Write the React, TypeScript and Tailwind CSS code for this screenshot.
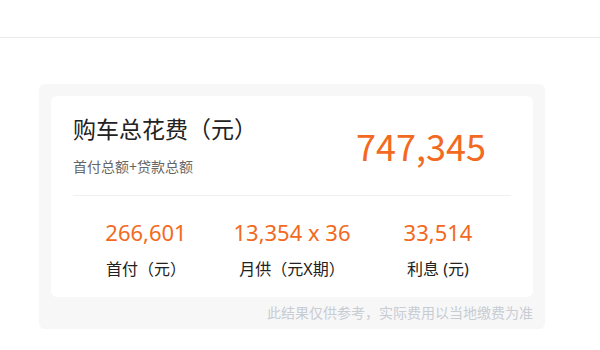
const cjk = { fontFamily: '"Noto Sans", "Noto Sans CJK SC", sans-serif' }

function Stat({ value, label }: { value: string; label: string }) {
  return (
    <div className="flex flex-col items-center">
      <div className="text-[22px] leading-[30px] text-[#f26a21]">{value}</div>
      <div className="mt-[11px] text-[16px] leading-[22px] text-[#222]">{label}</div>
    </div>
  )
}

export default function App() {
  return (
    <div className="h-[350px] w-[600px] bg-white" style={cjk}>
      <div className="h-[38px] border-b border-[#ebebeb]" />
      <div className="ml-[39px] mt-[46px] w-[506px] rounded-[6px] bg-[#f7f7f8] px-[12px] pt-[12px] pb-[7px]">
        <div className="rounded-[6px] bg-white px-[22px] pt-[18px]">
          <div className="flex items-center justify-between border-b border-[#f0f0f0] pb-[19px]">
            <div>
              <div className="text-[23px] leading-[30px] text-[#222]">购车总花费（元）</div>
              <div className="mt-[14px] text-[14px] leading-[18px] text-[#666]">首付总额+贷款总额</div>
            </div>
            <div
              className="mr-[25px] text-[36px] leading-[46px] text-[#f26a21]"
              style={{ fontFamily: '"Noto Sans CJK SC", "Noto Sans", sans-serif' }}
            >
              747,345
            </div>
          </div>
          <div className="grid grid-cols-3 pt-[21px] pb-[17px]">
            <Stat value="266,601" label="首付（元）" />
            <Stat value="13,354 x 36" label="月供（元X期）" />
            <Stat value="33,514" label="利息 (元)" />
          </div>
        </div>
        <div className="mt-[7px] text-right text-[14px] leading-[18px] text-[#c8ccd3]">
          此结果仅供参考，实际费用以当地缴费为准
        </div>
      </div>
    </div>
  )
}
